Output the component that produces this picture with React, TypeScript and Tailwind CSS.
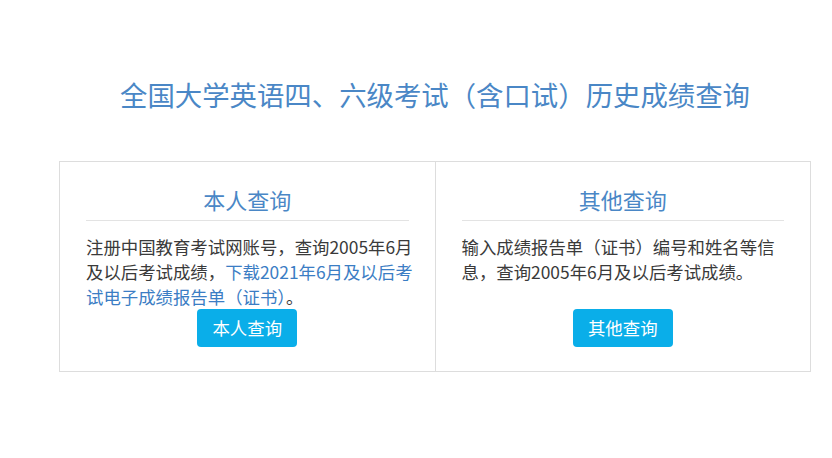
import React from 'react';

const cards = [
  {
    title: '本人查询',
    button: '本人查询',
    body: (
      <>
        注册中国教育考试网账号，查询2005年6月及以后考试成绩，
        <a href="#" className="text-[#3b7dc4]">下载2021年6月及以后考试电子成绩报告单（证书）</a>。
      </>
    ),
  },
  {
    title: '其他查询',
    button: '其他查询',
    body: <>输入成绩报告单（证书）编号和姓名等信息，查询2005年6月及以后考试成绩。</>,
  },
];

export default function App() {
  return (
    <div className="min-h-screen bg-white pl-[59px] pt-[74px] font-['Noto_Sans_CJK_SC',_'Noto_Sans',_sans-serif]">
      <div className="w-[752px]">
        <h1 className="text-center text-[27.4px] leading-[40px] text-[#4a87c6]">
          全国大学英语四、六级考试（含口试）历史成绩查询
        </h1>

        <div className="mt-[47px] flex h-[211px] border border-[#dddddd]">
          {cards.map((card, idx) => (
            <div
              key={card.title}
              className={`flex flex-1 flex-col px-[26px] pt-[22px] pb-[24px] ${idx === 0 ? 'border-r border-[#dddddd]' : ''}`}
            >
              <h3 className="border-b border-[#e3e3e3] pb-[6px] text-center text-[22px] leading-[30px] text-[#4a87c6]">
                {card.title}
              </h3>
              <p className="mt-[13px] -mr-[10px] text-[17.4px] leading-[25px] text-[#3a3a3a]">{card.body}</p>
              <div className="mt-auto flex justify-center">
                <button className="h-[38px] w-[100px] rounded-[4px] bg-[#0aaee9] text-[17.4px] text-white">
                  {card.button}
                </button>
              </div>
            </div>
          ))}
        </div>
      </div>
    </div>
  );
}
